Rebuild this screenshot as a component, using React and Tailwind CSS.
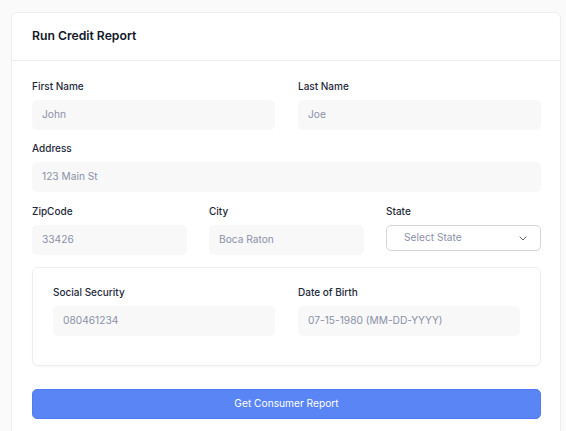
import React from "react";

function Field({ label, value, className = "" }) {
  return (
    <div className={`flex flex-col ${className}`}>
      <label className="text-[10px] font-medium leading-[13px] text-[#1e293b]">{label}</label>
      <div className="mt-[7px] h-[30px] rounded-[5px] bg-[#f8f8f9] px-[10px] flex items-center text-[10.2px] text-[#8b90a7]">
        {value}
      </div>
    </div>
  );
}

export default function App() {
  return (
    <div className="min-h-[431px] w-[566px] bg-[#fafafa] pt-[12px] pl-[11px] pr-[5px] overflow-hidden" style={{ fontFamily: "Inter, 'Noto Sans', sans-serif" }}>
      <div className="rounded-t-[6px] border border-[#eeeeee] bg-white h-[440px]">
        <div className="h-[48px] flex items-center px-[20px] border-b border-[#eeeeee]">
          <h2 className="text-[12.2px] font-semibold text-[#111827]">Run Credit Report</h2>
        </div>
        <div className="pl-[20px] pr-[19px] pt-[19px]">
          <div className="grid grid-cols-2 gap-x-[23px]">
            <Field label="First Name" value="John" />
            <Field label="Last Name" value="Joe" />
          </div>
          <Field className="mt-[12px]" label="Address" value="123 Main St" />
          <div className="mt-[13px] grid grid-cols-3 gap-x-[22px]">
            <Field label="ZipCode" value="33426" />
            <Field label="City" value="Boca Raton" />
            <div className="flex flex-col">
              <label className="text-[10px] font-medium leading-[13px] text-[#1e293b]">State</label>
              <div className="mt-[7px] h-[26px] rounded-[5px] border border-[#d4d6dc] bg-white pl-[17px] pr-[13px] flex items-center justify-between text-[10.2px] text-[#8b90a7]">
                <span>Select State</span>
                <svg width="8" height="5" viewBox="0 0 8 5" fill="none">
                  <path d="M1 1l3 3 3-3" stroke="#5b6170" strokeWidth="1" strokeLinecap="round" strokeLinejoin="round" />
                </svg>
              </div>
            </div>
          </div>
          <div className="mt-[12px] h-[99px] rounded-[6px] border border-[#eeeeee] shadow-[0_1px_2px_rgba(0,0,0,0.04)] px-[20px] pt-[18px]">
            <div className="grid grid-cols-2 gap-x-[23px]">
              <Field label="Social Security" value="080461234" />
              <Field label="Date of Birth" value="07-15-1980 (MM-DD-YYYY)" />
            </div>
          </div>
          <button className="mt-[23px] w-full h-[30px] rounded-[5px] bg-[#5a85f5] border border-[#4f7cf2] text-white text-[10.2px] flex items-center justify-center">
            Get Consumer Report
          </button>
        </div>
      </div>
    </div>
  );
}
